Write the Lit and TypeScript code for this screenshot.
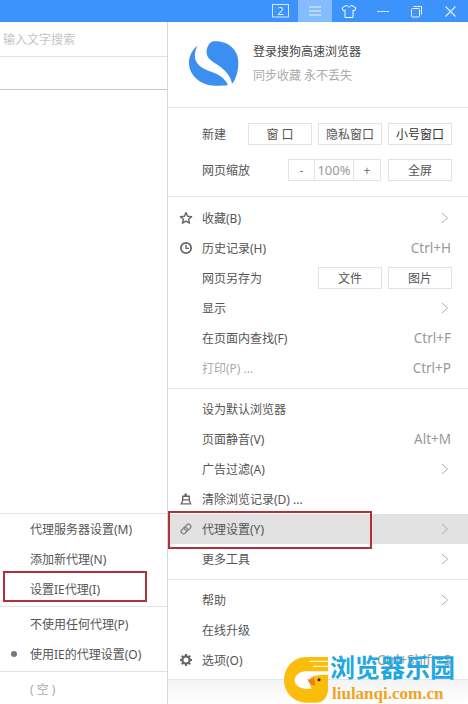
import { LitElement, html, css, svg } from "lit";
import { customElement } from "lit/decorators.js";

type Row = { label: string; icon?: string; arrow?: boolean; key?: string; muted?: boolean; active?: boolean; btns?: string[] };

const ICONS: Record<string, unknown> = {
  star: svg`<path d="M7 1.6 8.6 5.2 12.6 5.6 9.6 8.2 10.5 12.2 7 10.1 3.5 12.2 4.4 8.2 1.4 5.6 5.4 5.2Z" fill="none" stroke="#666" stroke-width="1.4" stroke-linejoin="round"/>`,
  clock: svg`<circle cx="7" cy="7" r="5.2" fill="none" stroke="#666" stroke-width="1.7"/><path d="M7 3.8V7.4H10" fill="none" stroke="#666" stroke-width="1.4"/>`,
  broom: svg`<path d="M5.5 1.5H7.8V3.5H11V8.5L12.5 12.5H1.2L3 8.5V3.5H5.5ZM4.4 5V7.2H9.6V5ZM4.4 8.4 3.2 11.2H10.8L9.6 8.4Z" fill="#666" fill-rule="evenodd"/>`,
  link: svg`<g transform="rotate(-45 7 7)" fill="none" stroke="#8a8a8a" stroke-width="1.4"><rect x="1.2" y="4.6" width="7" height="4.8" rx="2.4"/><rect x="5.8" y="4.6" width="7" height="4.8" rx="2.4"/></g>`,
  gear: svg`<circle cx="7" cy="7" r="3.6" fill="none" stroke="#666" stroke-width="2.2"/><path d="M7 1V3M7 11V13M1 7H3M11 7H13M2.8 2.8 4.2 4.2M9.8 9.8 11.2 11.2M2.8 11.2 4.2 9.8M9.8 4.2 11.2 2.8" stroke="#666" stroke-width="2"/>`,
};

const GROUP_A: Row[] = [
  { label: "收藏(B)", icon: "star", arrow: true },
  { label: "历史记录(H)", icon: "clock", key: "Ctrl+H" },
  { label: "网页另存为", btns: ["文件", "图片"] },
  { label: "显示", arrow: true },
  { label: "在页面内查找(F)", key: "Ctrl+F" },
  { label: "打印(P) ...", key: "Ctrl+P", muted: true },
];
const GROUP_B: Row[] = [
  { label: "设为默认浏览器" },
  { label: "页面静音(V)", key: "Alt+M" },
  { label: "广告过滤(A)", arrow: true },
  { label: "清除浏览记录(D) ...", icon: "broom" },
  { label: "代理设置(Y)", icon: "link", arrow: true, active: true },
  { label: "更多工具", arrow: true },
];
const GROUP_C: Row[] = [
  { label: "帮助", arrow: true },
  { label: "在线升级" },
  { label: "选项(O)", icon: "gear", key: "Ctrl+Shift+S" },
];

@customElement("app-root")
export class AppRoot extends LitElement {
  static styles = css`
    :host {
      display: block;
      position: relative;
      width: 468px;
      height: 704px;
      overflow: hidden;
      background: #fff;
      font-family: "Noto Sans", "Noto Sans CJK SC", sans-serif;
      font-size: 12px;
      color: #555;
    }
    .titlebar {
      height: 22px;
      background: #3b93fb;
      display: flex;
      justify-content: flex-end;
      align-items: stretch;
    }
    .tb {
      display: flex;
      align-items: center;
      justify-content: center;
    }
    .tb.on { background: #85bcfd; }
    .tb.count { width: 25px; padding-right: 5px; }
    .tb.w34 { width: 34px; }
    .tb.w33 { width: 33px; }
    .tb.w36 { width: 36px; }
    .tb.w31 { width: 31px; }
    .main { display: flex; height: 682px; }
    .left {
      width: 167px;
      flex: none;
      display: flex;
      flex-direction: column;
      border-right: 1px solid #d8d8d8;
    }
    .search {
      height: 35px;
      box-sizing: border-box;
      padding-left: 3px;
      display: flex;
      align-items: center;
      color: #c4c4c4;
      border-bottom: 1px solid #e2e2e2;
    }
    .blank {
      height: 32px;
      border-bottom: 1px solid #c8c8c8;
    }
    .spacer { flex: 1; }
    .sub {
      border-top: 1px solid #e4e4e4;
      height: 191px;
      box-sizing: border-box;
    }
    .sub-group { padding: 2px 0; border-bottom: 1px solid #e4e4e4; }
    .sub-group:first-child { padding-top: 0; }
    .sub-group:last-child { border-bottom: 0; padding-bottom: 0; }
    .sub-row {
      height: 30px;
      display: flex;
      align-items: center;
      padding-left: 30px;
      position: relative;
    }
    .sub-row.muted { color: #aaa; }
    .dot {
      position: absolute;
      left: 11px;
      top: 12px;
      width: 6px;
      height: 6px;
      border-radius: 50%;
      background: #777;
    }
    .menu { flex: 1; display: flex; flex-direction: column; }
    .login {
      height: 86px;
      box-sizing: border-box;
      display: flex;
      align-items: flex-start;
      border-bottom: 1px solid #e6e6e6;
    }
    .logo { margin: 13px 0 0 7px; flex: none; }
    .login-text { margin: 21px 0 0 8px; display: flex; flex-direction: column; gap: 7px; }
    .login-title { color: #444; line-height: 17px; }
    .login-sub { color: #aaa; line-height: 17px; }
    .tools {
      height: 89px;
      box-sizing: border-box;
      padding: 15px 16px 0 34px;
      display: flex;
      flex-direction: column;
      gap: 14px;
      border-bottom: 1px solid #e6e6e6;
    }
    .tool-row { display: flex; align-items: center; height: 22px; }
    .tool-label { flex: 1; }
    .btns { display: flex; gap: 6px; }
    .btn {
      box-sizing: border-box;
      width: 64px;
      height: 22px;
      border: 1px solid #e4e4e4;
      display: flex;
      align-items: center;
      justify-content: center;
      color: #555;
      background: #fff;
    }
    .btn.dark { color: #333; }
    .zoomer { display: flex; width: 93px; height: 22px; margin-right: 7px; }
    .zoomer span {
      box-sizing: border-box;
      height: 22px;
      border: 1px solid #e4e4e4;
      border-left-width: 0;
      display: flex;
      align-items: center;
      justify-content: center;
      color: #777;
      width: 27px;
    }
    .zoomer span:first-child { border-left-width: 1px; }
    .zoomer span.pct { width: 39px; color: #999; font-size: 13px; }
    .group { padding: 5px 0; border-bottom: 1px solid #e6e6e6; }
    .group.first { padding-top: 6px; }
    .group.last { padding-bottom: 4px; }
    .foot { flex: 1; background: linear-gradient(#f3f3f3, #fff); }
    .row {
      height: 30px;
      box-sizing: border-box;
      display: flex;
      align-items: center;
      padding: 0 17px 0 34px;
      position: relative;
    }
    .row.active { background: #e2e2e2; }
    .row.muted { color: #aaa; }
    .row-label { flex: 1; }
    .row-key { color: #999; font-size: 13.5px; }
    .row-icon { position: absolute; left: 11px; top: 8px; }
    .arrow { margin-right: 2px; }
    .row .btns { margin-right: -1px; }
    .red {
      position: absolute;
      box-sizing: border-box;
      border: 2px solid #b3303a;
      pointer-events: none;
    }
    .red.a { left: 3px; top: 571px; width: 144px; height: 31px; }
    .red.b { left: 168px; top: 511px; width: 204px; height: 38px; }
    .mark {
      position: absolute;
      left: 275px;
      top: 650px;
      width: 193px;
      height: 54px;
      pointer-events: none;
    }
    .mark-cn {
      position: absolute;
      left: 55px;
      top: 3px;
      font-family: "Liberation Serif", "Noto Sans CJK SC", serif;
      font-size: 25px;
      line-height: 32px;
      font-weight: 700;
      color: #1fa8e2;
      white-space: nowrap;
    }
    .mark-en {
      position: absolute;
      left: 57px;
      top: 34px;
      font-family: "Liberation Serif", serif;
      font-size: 17px;
      line-height: 20px;
      font-weight: 700;
      color: #f0a31e;
      white-space: nowrap;
    }
  `;

  private arrow() {
    return html`<svg class="arrow" width="8" height="12" viewBox="0 0 8 12"><path d="M1 1 6.5 6 1 11" fill="none" stroke="#aaa"/></svg>`;
  }

  private row(r: Row) {
    return html`<div class="row ${r.active ? "active" : ""} ${r.muted ? "muted" : ""}">
      ${r.icon ? html`<svg class="row-icon" width="14" height="14" viewBox="0 0 14 14">${ICONS[r.icon]}</svg>` : ""}
      <span class="row-label">${r.label}</span>
      ${r.key ? html`<span class="row-key">${r.key}</span>` : ""}
      ${r.btns ? html`<div class="btns">${r.btns.map((b) => html`<div class="btn">${b}</div>`)}</div>` : ""}
      ${r.arrow ? this.arrow() : ""}
    </div>`;
  }

  render() {
    return html`
      <div class="titlebar">
        <div class="tb count">
          <svg width="18" height="14" viewBox="0 0 18 14"><rect x=".5" y=".5" width="16" height="12.5" fill="none" stroke="#d6e8ff"/><text x="8.5" y="11" text-anchor="middle" font-size="11" fill="#e6f1ff" font-family="Noto Sans">2</text></svg>
        </div>
        <div class="tb on w34">
          <svg width="14" height="12" viewBox="0 0 14 12"><path d="M1 2H13M1 6H13M1 10H13" stroke="#eaf3ff"/></svg>
        </div>
        <div class="tb w33">
          <svg width="16" height="15" viewBox="0 0 16 15"><path d="M5 1.5H6.2C6.7 3.5 9.3 3.5 9.8 1.5H11L15 4 13.5 7 12 6V13.5H4V6L2.5 7 1 4Z" fill="none" stroke="#fff" stroke-linejoin="round"/></svg>
        </div>
        <div class="tb w36">
          <svg width="12" height="12" viewBox="0 0 12 12"><path d="M0 6.5H12" stroke="#d6e8ff"/></svg>
        </div>
        <div class="tb w31">
          <svg width="13" height="13" viewBox="0 0 13 13"><rect x="1.5" y="3.5" width="8" height="8.5" rx="1" fill="none" stroke="#eaf3ff"/><path d="M3.5 1.5H11.5V9.5" fill="none" stroke="#eaf3ff"/></svg>
        </div>
        <div class="tb w36">
          <svg width="13" height="13" viewBox="0 0 13 13"><path d="M1.5 1.5 11.5 11.5M11.5 1.5 1.5 11.5" stroke="#eaf3ff" stroke-width="1.1"/></svg>
        </div>
      </div>
      <div class="main">
        <div class="left">
          <div class="search">输入文字搜索</div>
          <div class="blank"></div>
          <div class="spacer"></div>
          <div class="sub">
            <div class="sub-group">
              <div class="sub-row">代理服务器设置(M)</div>
              <div class="sub-row">添加新代理(N)</div>
              <div class="sub-row">设置IE代理(I)</div>
            </div>
            <div class="sub-group">
              <div class="sub-row">不使用任何代理(P)</div>
              <div class="sub-row"><span class="dot"></span>使用IE的代理设置(O)</div>
            </div>
            <div class="sub-group">
              <div class="sub-row muted">( 空 )</div>
            </div>
          </div>
        </div>
        <div class="menu">
          <div class="login">
            <svg class="logo" width="70" height="60" viewBox="0 0 210 180">
              <path d="M70 30C50 45 42 65 42 85C42 125 85 155 125 152C138 152 148 152 159 150C150 132 135 120 112 112C85 102 55 88 60 55C62 45 65 35 70 30Z" fill="#3a8ff0"/>
              <path d="M110 20C150 12 190 40 190 80C190 110 182 135 171 146C168 125 150 104 125 88C105 76 92 65 95 45C97 33 103 25 110 20Z" fill="#3a8ff0"/>
            </svg>
            <div class="login-text">
              <div class="login-title">登录搜狗高速浏览器</div>
              <div class="login-sub">同步收藏 永不丢失</div>
            </div>
          </div>
          <div class="tools">
            <div class="tool-row">
              <span class="tool-label">新建</span>
              <div class="btns">
                <div class="btn">窗 口</div>
                <div class="btn">隐私窗口</div>
                <div class="btn dark">小号窗口</div>
              </div>
            </div>
            <div class="tool-row">
              <span class="tool-label">网页缩放</span>
              <div class="zoomer"><span>-</span><span class="pct">100%</span><span>+</span></div>
              <div class="btn">全屏</div>
            </div>
          </div>
          <div class="group first">${GROUP_A.map((r) => this.row(r))}</div>
          <div class="group">${GROUP_B.map((r) => this.row(r))}</div>
          <div class="group last">${GROUP_C.map((r) => this.row(r))}</div>
          <div class="foot"></div>
        </div>
      </div>
      <div class="red a"></div>
      <div class="red b"></div>
      <div class="mark">
        <svg width="193" height="54" viewBox="-9 -6 579 162">
          <path d="M150 15H85C45 15 18 48 18 85C18 122 48 152 85 152H115C135 152 150 135 150 110V60H150Z" fill="#fbbd0c"/>
          <path d="M150 58H85C65 58 50 70 50 85C50 100 65 110 85 110H100L92 85C98 72 110 68 150 68Z" fill="#fff"/>
          <path d="M95 28H150M105 43H150" stroke="#fff" stroke-width="3"/>
          <path d="M88 80C95 85 103 82 108 75L112 100C100 102 92 92 88 80Z" fill="#ee7b1e"/>
          <circle cx="123" cy="83" r="4.5" fill="#222"/>
        </svg>
        <span class="mark-cn">浏览器乐园</span>
        <span class="mark-en">liulanqi.com.cn</span>
      </div>
    `;
  }
}
